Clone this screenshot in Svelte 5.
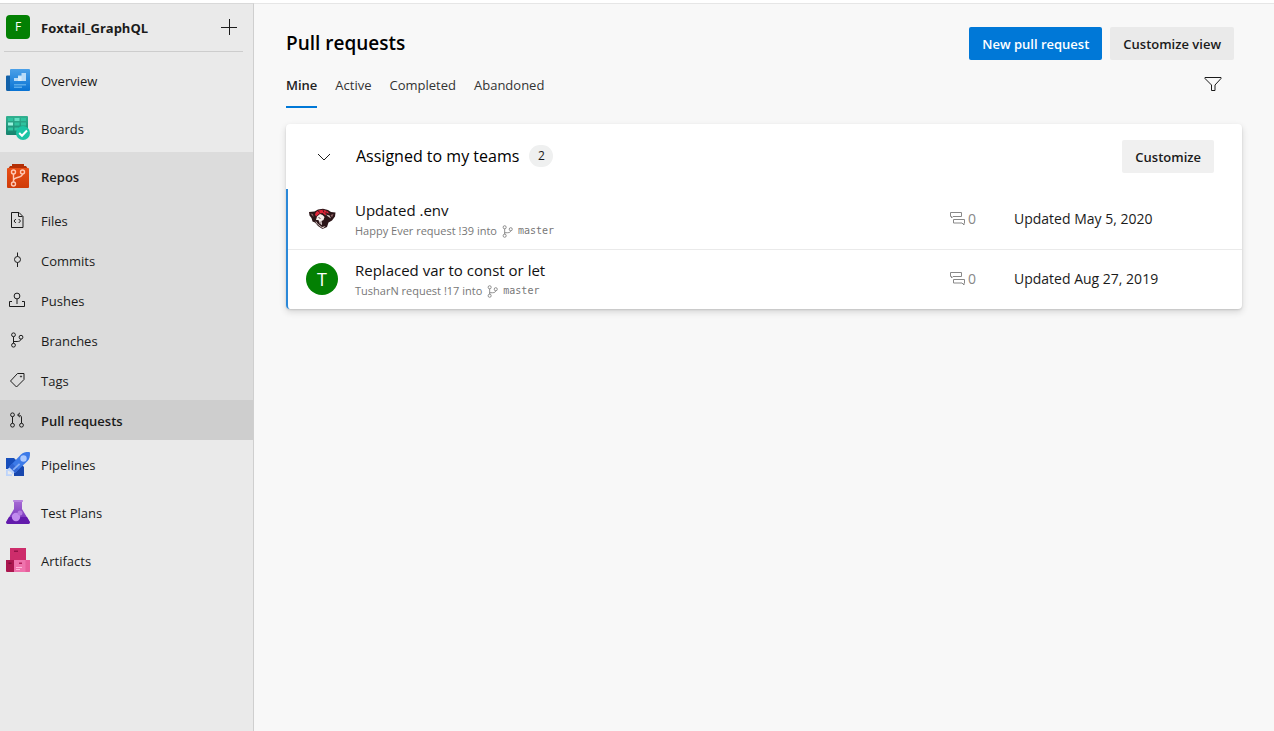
<script>
  const services = [
    { id: 'overview', label: 'Overview' },
    { id: 'boards', label: 'Boards' },
  ];
  const repoPages = [
    { id: 'files', label: 'Files' },
    { id: 'commits', label: 'Commits' },
    { id: 'pushes', label: 'Pushes' },
    { id: 'branches', label: 'Branches' },
    { id: 'tags', label: 'Tags' },
    { id: 'pulls', label: 'Pull requests', current: true },
  ];
  const moreServices = [
    { id: 'pipelines', label: 'Pipelines' },
    { id: 'testplans', label: 'Test Plans' },
    { id: 'artifacts', label: 'Artifacts' },
  ];
  const tabs = ['Mine', 'Active', 'Completed', 'Abandoned'];
  const requests = [
    { title: 'Updated .env', detail: 'Happy Ever request !39 into', branch: 'master', comments: 0, updated: 'Updated May 5, 2020', avatar: 'tiger' },
    { title: 'Replaced var to const or let', detail: 'TusharN request !17 into', branch: 'master', comments: 0, updated: 'Updated Aug 27, 2019', avatar: 'T' },
  ];
  let active = $state('Mine');
  let open = $state(true);
</script>

{#snippet branchIcon()}
  <circle cx="4.5" cy="2.8" r="1.9" /><circle cx="4.5" cy="13.2" r="1.9" /><circle cx="12" cy="5.2" r="1.9" />
  <path d="M4.5 4.7v6.6M4.5 9.5h3.6c2.4 0 3.9-1 3.9-2.4" />
{/snippet}

{#snippet serviceIcon(id)}
  <svg class="service" viewBox="0 0 24 24" aria-hidden="true">
    {#if id === 'overview'}
      <defs>
        <linearGradient id="ov" x1="0" y1="0" x2="0" y2="1"><stop offset="0" stop-color="#4ba0e8" /><stop offset="1" stop-color="#0872d3" /></linearGradient>
      </defs>
      <path d="M0 8.5a1 1 0 0 1 1-1h4V23H1.5A1.5 1.5 0 0 1 0 21.5z" fill="#1261a9" />
      <path d="M5 1h18a1 1 0 0 1 1 1v20a1 1 0 0 1-1 1H3.5C4.5 23 4 21.5 4 20.5V2a1 1 0 0 1 1-1z" fill="url(#ov)" />
      <path d="M8 10h4V7.500h3.500V5H20v8H8z" fill="#b9dbf7" />
      <path d="M12 8.5h3.5V13H12z" fill="#d6ebfb" />
      <path d="M8 16h12v1.500H8zM8 18.500h8V20H8z" fill="#5aabea" />
    {:else if id === 'boards'}
      <defs><linearGradient id="bo" x1="0" y1="0" x2="0" y2="1"><stop offset="0" stop-color="#32b190" /><stop offset="1" stop-color="#16836e" /></linearGradient></defs>
      <rect width="22" height="19" rx="1" fill="url(#bo)" />
      <path d="M2 2h5v3H2zM15 2h5v3h-5zM8.5 6.5h5v3h-5zM15 6.5h5v3h-5zM2 11.5h5v3H2zM8.5 11.5h4v3h-4z" fill="#2fc39f" />
      <path d="M8.5 2h5v3h-5z" fill="#62dfc2" /><path d="M2 6.5h5v3H2z" fill="#9af3df" />
      <circle cx="17" cy="17" r="7" fill="#1bc4a4" />
      <path d="M13.2 17l2.800 2.800 5-5.300" fill="none" stroke="#fff" stroke-width="2" />
    {:else if id === 'repos'}
      <defs><linearGradient id="re" x1="0" y1="0" x2="0" y2="1"><stop offset="0" stop-color="#e84f16" /><stop offset="1" stop-color="#cf3b08" /></linearGradient></defs>
      <path d="M6 0h12v2h2l2 3H2l2-3h2z" fill="#b42f05" />
      <path d="M2 4h20a1 1 0 0 1 1 1v18a1 1 0 0 1-1 1H2a1 1 0 0 1-1-1V5a1 1 0 0 1 1-1z" fill="url(#re)" />
      <g fill="none" stroke="#ffc9b5" stroke-width="1.4"><circle cx="7.5" cy="8" r="2" /><circle cx="16.5" cy="8" r="2" /><circle cx="7.5" cy="20" r="2" /><path d="M7.5 10v8M7.5 16.500c0-2 2-2.500 4-3 3-.7 5-1.300 5-3.500" /></g>
    {:else if id === 'pipelines'}
      <path d="M0 6h8l3 3-7 8H0z" fill="#174ebb" />
      <path d="M8 19l8-6 2 2v9H8z" fill="#1847ae" />
      <path d="M3 15L15 2.500C17 .5 19 0 23 0a1 1 0 0 1 1 1c0 4-.5 6-2.500 8L9 21z" fill="#3c7ae8" />
      <path d="M6.500 11.500L3 15l6 6 3.500-3.500z" fill="#3065d3" />
      <circle cx="17.5" cy="6.500" r="3.200" fill="#abc9ff" />
      <path d="M6.500 17.300l6.500-6 1.200 1.200-6.500 6z" fill="#86aef6" />
      <path d="M3.500 15.500l5 5-2 2-1.500-2.500-2.500-1-1.500-1.500zM0 18h1.800v4.200H6V24H0z" fill="#bdd4fb" />
    {:else if id === 'testplans'}
      <defs><linearGradient id="te" x1="0" y1="0" x2="0" y2="1"><stop offset="0" stop-color="#a76bd4" /><stop offset="1" stop-color="#6c29b6" /></linearGradient></defs>
      <path d="M8 1h8v8l7.500 12.500C24.300 23 23.500 24 22 24H2C.5 24-.3 23 .5 21.500L8 9z" fill="url(#te)" />
      <path d="M3 17h18l2.500 4.500C24.300 23 23.500 24 22 24H2C.5 24-.3 23 .5 21.500z" fill="#631bac" />
      <rect x="7" width="10" height="2" rx=".7" fill="#b783df" />
      <circle cx="10" cy="17" r="4.200" fill="#c18bee" /><circle cx="14" cy="13" r="2.500" fill="#b27ce0" />
    {:else}
      <path d="M4 0h16v13H4z" fill="#cd2d6b" /><path d="M8 2.500h4v1.500H8z" fill="#941348" />
      <path d="M0 12h8v12H1a1 1 0 0 1-1-1z" fill="#ab174f" />
      <path d="M8 12h16v11a1 1 0 0 1-1 1H8z" fill="#ef73ad" />
      <path d="M19.500 12H24v11a1 1 0 0 1-1 1h-3.500z" fill="#e75d9a" />
      <path d="M13 14.500h3V16h-3z" fill="#b3205b" /><path d="M2.500 14.500h3V16h-3z" fill="#7d0d3a" />
      <path d="M10 19h6v1h-6zM10 21h4v1h-4z" fill="#ffb8da" />
    {/if}
  </svg>
{/snippet}

{#snippet pageIcon(id)}
  <svg class="page-icon" viewBox="0 0 16 16" aria-hidden="true">
    {#if id === 'files'}
      <path d="M2.5.5h7.500l4 4v11H2.500zM9.500.5v4h4M6.800 7L5 9l1.800 2M9.700 7l1.800 2-1.800 2" />
    {:else if id === 'commits'}
      <circle cx="8.500" cy="7.500" r="3" /><path d="M8.500 .5v4M8.500 10.500v4.500" />
    {:else if id === 'pushes'}
      <circle cx="8" cy="4" r="2.900" /><path d="M8 7v5M3 9.500H.5v5h15v-5H13" />
    {:else if id === 'branches'}
      {@render branchIcon()}
    {:else if id === 'tags'}
      <path d="M1.500 9L8.500 1.500h6.500v6L7.500 15z" /><circle cx="12" cy="4.500" r=".6" />
    {:else}
      <circle cx="3.500" cy="2.800" r="1.900" /><circle cx="3.500" cy="13.200" r="1.900" /><circle cx="12.500" cy="13.200" r="1.900" />
      <path d="M3.500 4.700v6.600M12.500 11.300V6c0-2-.8-3-3.500-3M11 .8L8.500 3 11 5.200" />
    {/if}
  </svg>
{/snippet}

{#snippet service(item)}
  <a class="nav-item" href="#{item.id}">{@render serviceIcon(item.id)}<span>{item.label}</span></a>
{/snippet}

<div class="app">
  <nav class="sidebar" aria-label="Project">
    <div class="project">
      <span class="logo">F</span>
      <strong>Foxtail_GraphQL</strong>
      <button class="icon-button" aria-label="Add">
        <svg width="16" height="16" viewBox="0 0 16 16"><path d="M8.500 0v16M0 8.500h16" /></svg>
      </button>
    </div>
    {#each services as item}{@render service(item)}{/each}
    <div class="group">
      <a class="nav-item heading" href="#repos">{@render serviceIcon('repos')}<span>Repos</span></a>
      {#each repoPages as page}
        <a class="nav-item sub" class:current={page.current} aria-current={page.current ? 'page' : undefined} href="#{page.id}">
          {@render pageIcon(page.id)}<span>{page.label}</span>
        </a>
      {/each}
    </div>
    {#each moreServices as item}{@render service(item)}{/each}
  </nav>

  <main>
    <header>
      <h1>Pull requests</h1>
      <button class="button primary">New pull request</button>
      <button class="button">Customize view</button>
    </header>
    <div class="toolbar">
      <div class="tabs" role="tablist">
        {#each tabs as tab}
          <button role="tab" class="tab" class:selected={active === tab} aria-selected={active === tab} onclick={() => (active = tab)}>{tab}</button>
        {/each}
      </div>
      <button class="icon-button" aria-label="Filter">
        <svg width="18" height="16" viewBox="0 0 18 16"><path d="M1 1.500h16v1l-6 6.500v5.500H7.500V9L1 2.500z" /></svg>
      </button>
    </div>

    <section class="card">
      <div class="card-head">
        <button class="icon-button chevron" aria-label="Toggle group" aria-expanded={open} onclick={() => (open = !open)}>
          <svg width="14" height="8" viewBox="0 0 14 8"><path d="M1 1l6 6 6-6" /></svg>
        </button>
        <h2>Assigned to my teams</h2>
        <span class="count">2</span>
        <button class="button soft">Customize</button>
      </div>
      {#if open}
        <ul>
          {#each requests as request}
            <li>
              {#if request.avatar === 'tiger'}
                <svg class="avatar" viewBox="0 0 32 32" aria-hidden="true">
                  <path d="M3 9l5.500-.5L12 6.500l5-.7 5 1.200 3 2 4.500.5-.5 4-3 4-3.500 2-1.500 4.500-4.500 2-4.500-3-3-3.500-2.500-1-1-3.500-2-2.500z" fill="#2b1518" />
                  <path d="M10 9l3-1.800 4-.4 4 1.200 2.500 2.500-3-.5-1 2.500-3-2.500-3 .5-3.500 3-1-2z" fill="#e02438" />
                  <path d="M12 8l2 1.500M17 7l1 2.500M20.500 8.500l-1 2" stroke="#2b1518" stroke-width=".8" />
                  <path d="M4.500 10.500l2.500.5.5 3zM27.500 11l-3 1 1.500 2.500z" fill="#8c6164" />
                  <path d="M11 13.500l3-2.500 2.500 1 2 2-1 3-2 1 .5 4-2.500-1.500-1-3.500-2.500 0z" fill="#f6eeec" />
                  <path d="M20 11.500l3.500 1 1.500 3-3-2zM9.500 17.500l2 3 4.500 3.500 3.500-1-2.500 2.500-3.500-2.500-3.500-3z" fill="#dccbc9" />
                  <path d="M12.500 14.500l2 1M14 18.500l0 3" stroke="#4a2528" stroke-width=".8" fill="none" />
                </svg>
              {:else}
                <span class="avatar initial">{request.avatar}</span>
              {/if}
              <div class="summary">
                <a href="#pull">{request.title}</a>
                <p>
                  <span>{request.detail}</span>
                  <svg width="13" height="13" viewBox="0 0 16 16" aria-hidden="true">{@render branchIcon()}</svg>
                  <code>{request.branch}</code>
                </p>
              </div>
              <span class="comments">
                <svg width="16" height="14" viewBox="0 0 16 14" aria-hidden="true"><path d="M.5 .5h11v4H3L1.500 6V4.500h-1zM3.500 7.500h11V11H14v2l-2-2H3.500z" /></svg>{request.comments}
              </span>
              <span class="updated">{request.updated}</span>
            </li>
          {/each}
        </ul>
      {/if}
    </section>
  </main>
</div>

<style>
  :global(body) { margin: 0; background: #fff; }
  .app {
    display: flex;
    box-sizing: border-box;
    min-height: 100vh;
    padding-top: 3px;
    font: 13px/20px "Segoe UI", "Open Sans", sans-serif;
    color: #1b1b1b;
  }
  svg { flex: none; fill: none; stroke: currentColor; }
  a { color: inherit; text-decoration: none; }
  button { font: inherit; color: inherit; border: 0; background: none; padding: 0; cursor: pointer; }
  h1, h2, p, ul { margin: 0; padding: 0; }
  .sidebar {
    flex: 0 0 253px;
    border-top: 1px solid #d9d9d9;
    border-right: 1px solid #cfcfcf;
    background: #eaeaea;
  }
  .project {
    display: flex;
    align-items: center;
    gap: 11px;
    height: 46px;
    margin: 0 10px 4px 4px;
    padding: 0 6px 1px 2px;
    border-bottom: 1px solid #cdcdcd;
  }
  .project strong { flex: 1; padding-top: 2px; font-weight: 700; }
  .logo {
    width: 24px;
    border-radius: 4px;
    background: #038003;
    color: #fff;
    font-size: 12px;
    line-height: 24px;
    text-align: center;
  }
  .icon-button { display: flex; }
  .nav-item { display: flex; align-items: center; gap: 11px; height: 48px; padding-left: 6px; }
  .nav-item span { padding-top: 2px; }
  .service { width: 24px; height: 24px; stroke: none; }
  .group { background: #dcdcdc; }
  .heading, .current { font-weight: 600; }
  .sub { height: 40px; }
  .page-icon { width: 16px; height: 16px; margin: 0 5px 0 3px; }
  .current { background: #cecece; }

  main {
    flex: 1;
    min-width: 0;
    padding: 23px 32px;
    border-top: 1px solid #e6e6e6;
    background: #f8f8f8;
  }
  header { display: flex; gap: 8px; padding-right: 8px; }
  h1 { flex: 1; font-size: 19px; line-height: 32px; font-weight: 600; color: #000; }
  .button {
    height: 33px;
    padding: 0 13px;
    border-radius: 2px;
    background: #eaeaea;
    font-weight: 600;
  }
  .primary { background: #0078d7; color: #fff; }
  .soft { background: #f0f0f0; }
  .toolbar { display: flex; align-items: center; justify-content: space-between; height: 48px; padding-right: 20px; }
  .tabs { display: flex; gap: 18px; height: 48px; }
  .tab { padding-top: 3px; border-bottom: 2px solid transparent; color: #333; }
  .selected { border-color: #0078d7; color: #222; font-weight: 600; }

  .card {
    margin-top: 16px;
    border-radius: 4px;
    background: #fff;
    box-shadow: 0 3px 7px rgb(0 0 0 / 14%), 0 1px 2px rgb(0 0 0 / 12%);
  }
  .card-head { display: flex; align-items: center; height: 65px; padding: 0 28px 0 31px; }
  .chevron { margin-right: 25px; }
  h2 { padding-bottom: 2px; font-size: 16px; font-weight: 400; color: #000; }
  .count {
    width: 24px;
    margin: 0 auto 2px 10px;
    border-radius: 12px;
    background: #eff0f0;
    font-size: 12px;
    line-height: 22px;
    text-align: center;
  }
  ul { list-style: none; }
  li {
    display: grid;
    grid-template-columns: 32px 1fr 64px 228px;
    align-items: center;
    box-sizing: border-box;
    height: 60px;
    padding-left: 18px;
    border-left: 2px solid #2b88d8;
  }
  li + li { box-shadow: inset 0 1px #eaeaea; }
  li:last-child { border-bottom-left-radius: 4px; }
  .avatar { width: 32px; height: 32px; stroke: none; }
  .initial { border-radius: 50%; background: #038003; color: #fff; font-size: 18px; line-height: 32px; text-align: center; }
  .summary { padding: 3px 0 0 17px; }
  .summary a { font-size: 15px; color: #111; }
  .summary p { display: flex; align-items: center; gap: 4px; font-size: 11px; color: #777; }
  code { font: 10px/20px "DejaVu Sans Mono", monospace; }
  .comments { display: flex; align-items: center; gap: 2px; font-size: 14px; color: #888; }
  .updated { font-size: 14px; }
</style>
